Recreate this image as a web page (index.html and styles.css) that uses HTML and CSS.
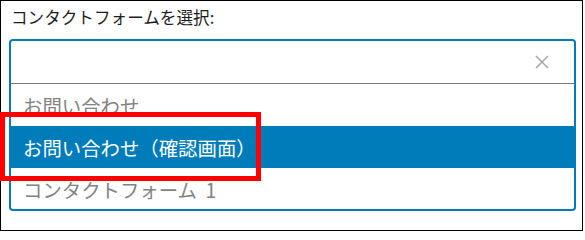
FILE: index.html
```html
<!DOCTYPE html>
<html lang="ja">
<head>
<meta charset="utf-8">
<title>コンタクトフォームを選択</title>
<link rel="stylesheet" href="styles.css">
</head>
<body>
<div class="frame">
  <div class="label">コンタクトフォームを選択:</div>
  <div class="select">
    <div class="search">
      <svg class="clear" width="14" height="14" viewBox="0 0 14 14" aria-hidden="true">
        <path d="M1 1 L13 13 M13 1 L1 13" stroke="#a7a7a7" stroke-width="1.6" fill="none"/>
      </svg>
    </div>
    <ul class="options">
      <li class="option">お問い合わせ</li>
      <li class="option is-active">お問い合わせ（確認画面）</li>
      <li class="option">コンタクトフォーム&nbsp; 1</li>
    </ul>
  </div>
  <div class="highlight-box"></div>
</div>
</body>
</html>
```

FILE: styles.css
```css
* { box-sizing: border-box; }
html, body { margin: 0; padding: 0; background: #fff; }
body {
  font-family: "Noto Sans CJK JP", "Noto Sans", sans-serif;
}
.frame {
  position: relative;
  width: 583px;
  height: 231px;
  border: 1px solid #000;
  padding: 4px 6px 0 8px;
  background: #fff;
}
.label {
  padding-left: 2px;
  font-size: 16.6px;
  line-height: 24px;
  color: #1e1e1e;
  margin-bottom: 10px;
}
.select {
  height: 172px;
  border: 2px solid #007cba;
  border-radius: 4px;
  overflow: hidden;
}
.search {
  height: 43px;
  border-bottom: 1px solid #7b7b7b;
  display: flex;
  align-items: center;
  justify-content: flex-end;
  padding-right: 25px;
}
.clear { display: block; }
.options {
  list-style: none;
  margin: 0;
  padding: 0;
}
.option {
  height: 42px;
  display: flex;
  align-items: center;
  padding-left: 12px;
  font-size: 19.4px;
  color: #828282;
  white-space: nowrap;
}
.option.is-active {
  background: #007cba;
  color: #fff;
}
.highlight-box {
  position: absolute;
  left: -1px;
  top: 111px;
  width: 261px;
  height: 69px;
  border: 5px solid #ff0000;
}
```
